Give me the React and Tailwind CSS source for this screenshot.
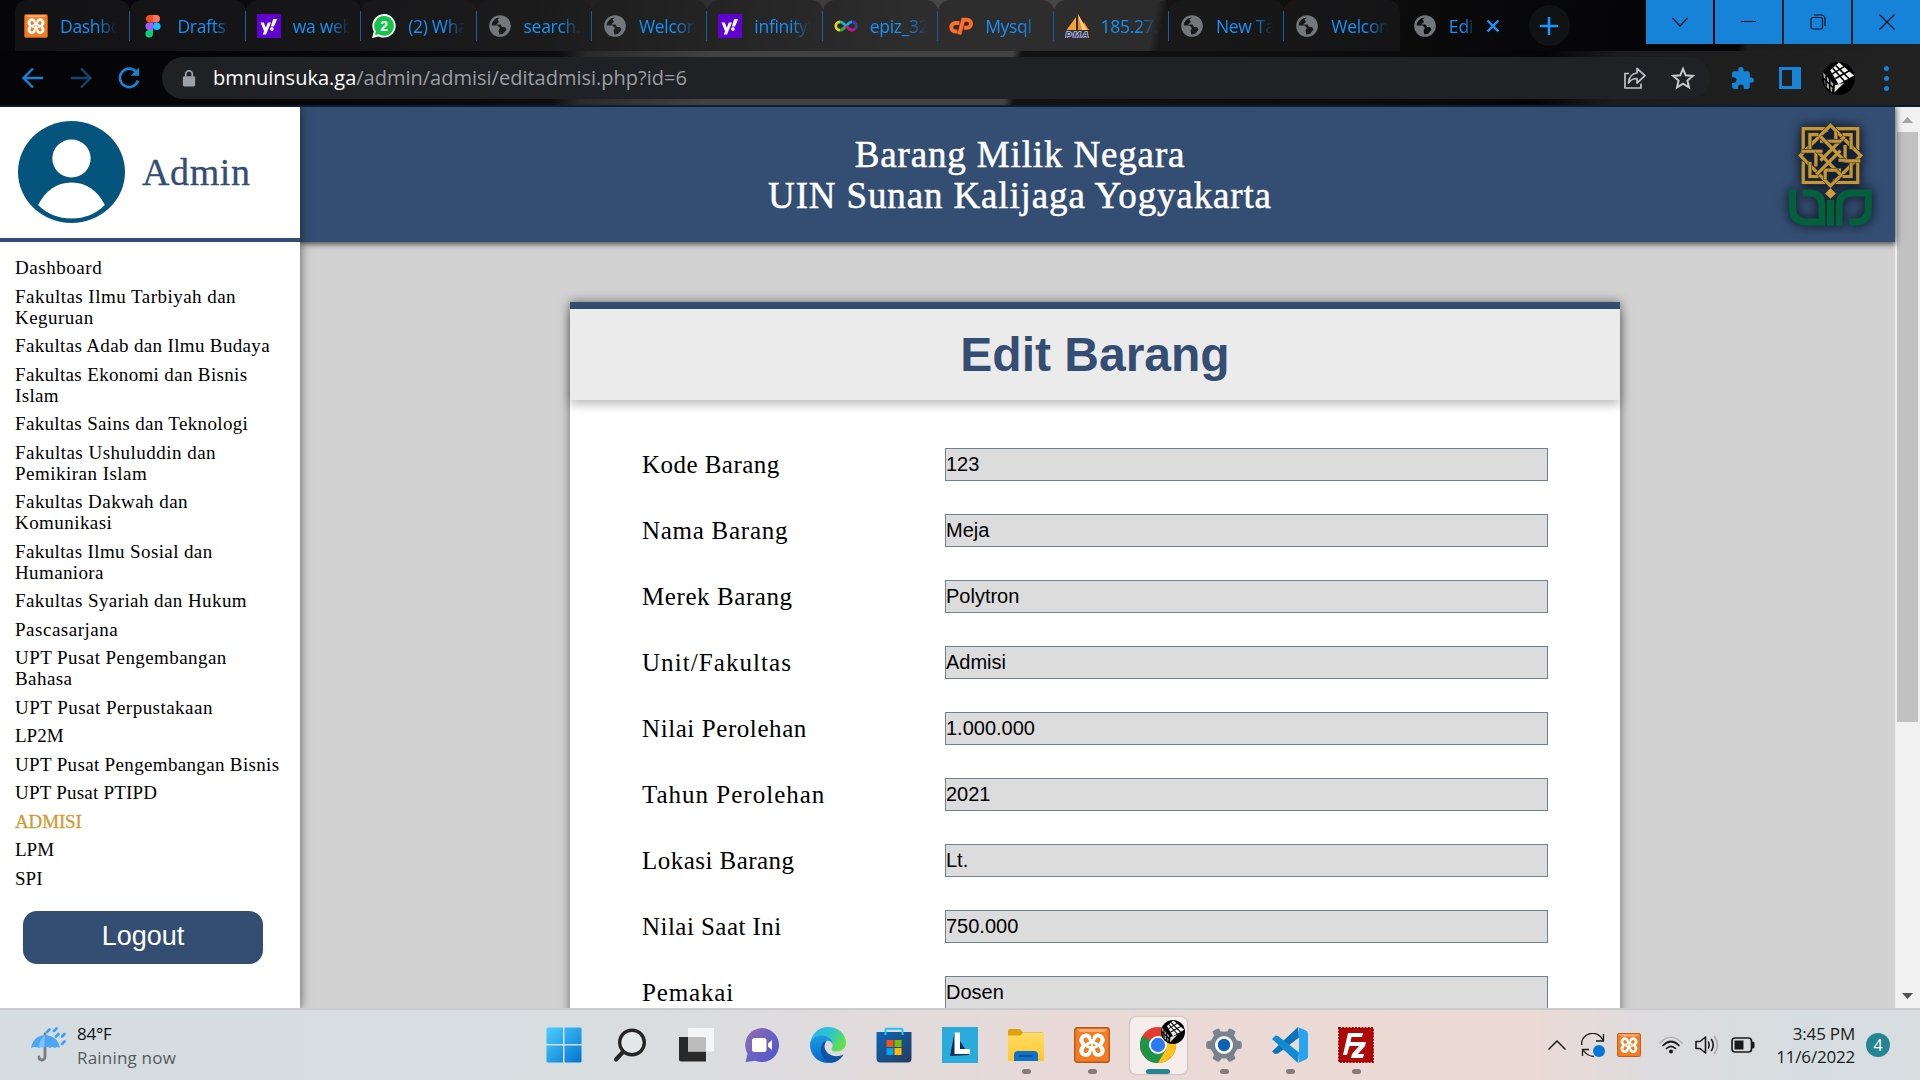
import React from 'react';

const tabs = [
  { icon: 'xampp', title: 'Dashboard' },
  { icon: 'figma', title: 'Drafts - Figma' },
  { icon: 'yahoo', title: 'wa web - Yahoo' },
  { icon: 'whatsapp', title: '(2) WhatsApp' },
  { icon: 'globe', title: 'search.php' },
  { icon: 'globe', title: 'Welcome' },
  { icon: 'yahoo', title: 'infinityfree' },
  { icon: 'infinity', title: 'epiz_3278' },
  { icon: 'cpanel', title: 'Mysql' },
  { icon: 'pma', title: '185.27.134' },
  { icon: 'globe', title: 'New Tab' },
  { icon: 'globe', title: 'Welcome', last: true },
];

const menu = [
  ['Dashboard', 'tracking-[0.54px]'],
  ['Fakultas Ilmu Tarbiyah dan Keguruan', 'tracking-[0.47px]'],
  ['Fakultas Adab dan Ilmu Budaya', 'tracking-[0.35px]'],
  ['Fakultas Ekonomi dan Bisnis Islam', 'tracking-[0.34px]'],
  ['Fakultas Sains dan Teknologi', 'tracking-[0.34px]'],
  ['Fakultas Ushuluddin dan Pemikiran Islam', 'tracking-[0.48px]'],
  ['Fakultas Dakwah dan Komunikasi', 'tracking-[0.44px]'],
  ['Fakultas Ilmu Sosial dan Humaniora', 'tracking-[0.38px]'],
  ['Fakultas Syariah dan Hukum', 'tracking-[0.42px]'],
  ['Pascasarjana', 'tracking-[0.52px]'],
  ['UPT Pusat Pengembangan Bahasa', 'tracking-[0.43px]'],
  ['UPT Pusat Perpustakaan', 'tracking-[0.47px]'],
  ['LP2M', 'tracking-[0px]'],
  ['UPT Pusat Pengembangan Bisnis', 'tracking-[0.34px]'],
  ['UPT Pusat PTIPD', 'tracking-[0.22px]'],
  ['ADMISI', 'tracking-[-0.15px]'],
  ['LPM', 'tracking-[0px]'],
  ['SPI', 'tracking-[0px]'],
];

const fields = [
  ['Kode Barang', '123', 'tracking-[0.46px]'],
  ['Nama Barang', 'Meja', 'tracking-[0.73px]'],
  ['Merek Barang', 'Polytron', 'tracking-[0.58px]'],
  ['Unit/Fakultas', 'Admisi', 'tracking-[1.07px]'],
  ['Nilai Perolehan', '1.000.000', 'tracking-[0.58px]'],
  ['Tahun Perolehan', '2021', 'tracking-[1px]'],
  ['Lokasi Barang', 'Lt.', 'tracking-[0.46px]'],
  ['Nilai Saat Ini', '750.000', 'tracking-[0.46px]'],
  ['Pemakai', 'Dosen', 'tracking-[0.84px]'],
];

function Xampp({ className }) {
  return (
    <svg viewBox="0 0 36 36" className={className}>
      <rect x="0.7" y="0.7" width="34.6" height="34.6" rx="2.5" fill="#f47b20" stroke="#b5581b" strokeWidth="1.4" />
      <path d="M3 2h30c-1 2.500-3 3-5 3H8C6 5 4 4.500 3 2z" fill="#ffb98a" opacity=".8" />
      <g fill="none" strokeLinecap="round" strokeLinejoin="round">
        <path d="M11.800 13 16.300 18l-4.500 5.500M24.200 13 19.700 18l4.500 5.500" stroke="#fff" strokeWidth="13" />
        <path d="M11.800 12.800 14.800 18l-3 5.700M24.200 12.800 21.200 18l3 5.700" stroke="#f47b20" strokeWidth="4.600" />
        <path d="M18 7v4.500M18 25v5" stroke="#f47b20" strokeWidth="1.500" />
        <path d="M12.500 17.500 18 14.500l5.500 3M12.500 19 18 21.500l5.500-2.500" stroke="#fff" strokeWidth="2.600" />
      </g>
    </svg>
  );
}

function Globe() {
  return (
    <svg viewBox="0 0 24 24" className="h-6 w-6">
      <circle cx="12" cy="12" r="9.600" fill="none" stroke="#74787c" strokeWidth="2.400" />
      <path d="M13 2.500 9.500 5.500 11 8l-3 2.500h4.500l1.500 2.500h3l1.500 2.500-4 5.500 6-3.500 2-6-2-6z" fill="#74787c" />
      <path d="M2.500 11.500h7l2.500 2.500-1.500 2.500 1 5L6 19.500z" fill="#74787c" />
    </svg>
  );
}

function Favicon({ name }) {
  if (name === 'xampp') return <Xampp className="h-6 w-6" />;
  if (name === 'globe') return <Globe />;
  if (name === 'figma')
    return (
      <svg viewBox="0 0 24 24" className="h-6 w-6">
        <path d="M12 1H8.200a3.800 3.800 0 0 0 0 7.500H12z" fill="#f24e1e" />
        <path d="M12 1h3.800a3.800 3.800 0 0 1 0 7.500H12z" fill="#ff7262" />
        <path d="M12 8.500H8.200a3.700 3.700 0 0 0 0 7.400H12z" fill="#a259ff" />
        <circle cx="15.800" cy="12.200" r="3.800" fill="#1abcfe" />
        <path d="M8.200 15.900H12v3.700a3.800 3.800 0 1 1-3.800-3.700z" fill="#0acf83" />
      </svg>
    );
  if (name === 'yahoo')
    return (
      <svg viewBox="0 0 24 24" className="h-6 w-6">
        <path d="M0 0h24v24H0z" fill="#6001d2" />
        <path d="M3.500 8.500h3.300l2 5.200 2-5.200H14L9 20.500H5.700l1.400-3.300z" fill="#fff" />
        <path d="m16.200 5 4 .1-3.200 7.400h-3.200zM14.500 13.300a1.800 1.800 0 1 1-.1 3.500 1.800 1.800 0 0 1 .1-3.500z" fill="#fff" />
      </svg>
    );
  if (name === 'whatsapp')
    return (
      <svg viewBox="0 0 24 24" className="h-6 w-6">
        <path d="M12.200 0A11.800 11.800 0 0 0 1.800 17.500L0 24l6.700-1.600A11.800 11.800 0 1 0 12.200 0z" fill="#fff" />
        <path d="M12.200 2A9.900 9.900 0 0 0 3.900 17.400L2.800 21.300l4-1A9.900 9.900 0 1 0 12.200 2z" fill="#15c24a" />
        <text x="12.200" y="17" textAnchor="middle" fontSize="14" fontWeight="700" fill="#fff" fontFamily="Liberation Sans, sans-serif">2</text>
      </svg>
    );
  if (name === 'infinity')
    return (
      <svg viewBox="0 0 24 24" className="h-6 w-6" fill="none" strokeWidth="2.800">
        <path d="M12 12C9.500 9 8.200 7.800 6 7.800" stroke="#19b5c8" />
        <path d="M6 7.800a4.200 4.200 0 0 0 0 8.400" stroke="#e3d51c" />
        <path d="M6 16.200c2.200 0 3.500-1.200 6-4.200" stroke="#33a83d" />
        <path d="M12 12c2.500-3 3.800-4.200 6-4.200" stroke="#18a7e0" />
        <path d="M18 7.800a4.200 4.200 0 0 1 3 7.200" stroke="#4a3b9a" />
        <path d="M21 15c-3 2.500-6 .5-9-3" stroke="#c2188b" />
      </svg>
    );
  if (name === 'cpanel')
    return (
      <svg viewBox="0 0 24 24" className="h-6 w-6" fill="none" stroke="#ff6c2c" strokeWidth="4">
        <path d="M10.500 9H6.500a4.200 4.200 0 0 0 0 8.500h2" />
        <path d="m10.300 20.500 3.900-14.800h3.800a4 4 0 0 1 0 8h-3" />
      </svg>
    );
  return (
    <svg viewBox="0 0 24 24" className="h-6 w-6">
      <path d="M1.500 16 11 3v13z" fill="#f7a13a" />
      <path d="M13 0v16h11L19 8l-1 2z" fill="#f58a1f" />
      <path d="m13 0 9 16h-5z" fill="#ffd08a" />
      <text x="12" y="23.500" textAnchor="middle" fontSize="9" fontWeight="700" fontStyle="italic" fill="#34366e" stroke="#c9cbe0" strokeWidth="1.600" paintOrder="stroke" textLength="23" fontFamily="Liberation Sans, sans-serif">PMA</text>
    </svg>
  );
}

function Cube({ className }) {
  return (
    <svg viewBox="0 0 32 32" className={className}>
      <circle cx="16" cy="16" r="16" fill="#000" />
      <path d="M16.500.500 31 13l-15 8.500L8 8z" fill="#f4f4f0" />
      <path d="m1 10 10 11-1.500 8L3 23z" fill="#a9a99c" />
      <path d="m12.500 22.500 9-2.500-9.500 9.500z" fill="#e5e5dc" />
      <path d="M13.500 3.500 26.500 16.500M10.500 6l11.500 13M10 11.500 21.500 4.500M13 16 26.500 8.500M4 13v11M7.500 16v12M1 15.500l10 9.500" stroke="#000" strokeWidth="1.500" fill="none" />
    </svg>
  );
}

function WindowButton({ children }) {
  return <div className="flex h-[54px] w-[67px] items-center justify-center bg-[#1683d8]">{children}</div>;
}

function TabStrip() {
  return (
    <div className="flex h-[51px] bg-[linear-gradient(100deg,#060509_0%,#0a090c_12%,#1b1b1b_28%,#303030_37%,#484848_48%,#444_60%,#141414_60.500%,#0a0a0b_75%,#050407_84%,#050407_90.500%,#1c1c1c_91%,#222_100%)]">
      <div className="ml-[15px] flex">
        {tabs.map((tab, i) => (
          <div key={i} className={`relative flex h-[51px] w-[115.400px] items-center rounded-t-xl bg-[#1c1c1e]/60 ${i === 0 ? 'pl-[9px]' : 'pl-[11px]'}`}>
            <Favicon name={tab.icon} />
            <div className="ml-3 w-[57px] overflow-hidden whitespace-nowrap font-['Open_Sans',sans-serif] text-[17.500px] leading-6 tracking-[-0.300px] text-[#1890f5] [mask-image:linear-gradient(90deg,#000_65%,transparent)]">{tab.title}</div>
            {!tab.last && <div className="absolute right-0 top-[11px] h-[30px] w-px bg-[#155f9e]" />}
          </div>
        ))}
        <div className="flex h-[51px] w-[118px] items-center pl-[13px]">
          <Globe />
          <div className="ml-3 w-[26px] overflow-hidden whitespace-nowrap font-['Open_Sans',sans-serif] text-[17.500px] leading-6 text-[#1890f5] [mask-image:linear-gradient(90deg,#000_60%,transparent)]">Edit Barang</div>
          <svg viewBox="0 0 14 14" className="ml-[11px] h-[14px] w-[14px]" stroke="#1a96ff" strokeWidth="2.400"><path d="m1.500 1.500 11 11m0-11-11 11" /></svg>
        </div>
      </div>
      <div className="ml-[11px] mt-[5px] flex h-[41px] w-[41px] items-center justify-center rounded-full bg-[#111213]">
        <svg viewBox="0 0 18 18" className="h-[18px] w-[18px]" stroke="#1a96ff" strokeWidth="2.600" strokeLinecap="round"><path d="M9 1v16M1 9h16" /></svg>
      </div>
      <div className="ml-auto flex h-[44px] gap-[2px] overflow-hidden">
        <WindowButton><svg viewBox="0 0 16 10" className="mb-[11px] h-[10px] w-4" fill="none" stroke="#04121f" strokeWidth="1.200"><path d="m.5 1 7.500 8L15.500 1" /></svg></WindowButton>
        <WindowButton><div className="mb-[11px] h-px w-[15px] bg-[#04121f]" /></WindowButton>
        <WindowButton><svg viewBox="0 0 16 16" className="mb-[11px] h-4 w-4" fill="none" stroke="#04121f" strokeWidth="1.200"><rect x="1" y="3.500" width="11.500" height="11.500" rx="2" /><path d="M4 1h7a4 4 0 0 1 4 4v7" /></svg></WindowButton>
        <WindowButton><svg viewBox="0 0 16 16" className="mb-[11px] h-4 w-4" fill="none" stroke="#04121f" strokeWidth="1.200"><path d="m.5.500 15 15m0-15-15 15" /></svg></WindowButton>
      </div>
    </div>
  );
}

function Toolbar() {
  return (
    <div className="flex h-[56px] items-center border-b-2 border-[#0a1e2f] bg-[linear-gradient(100deg,#040306_0%,#060508_18%,#0d0c0e_29%,#2b2a2b_30.500%,#424242_37%,#424242_52.500%,#131313_53%,#0a0a0b_75%,#040306_80%,#1c1c1c_84%,#222_100%)]">
      <svg viewBox="0 0 24 24" className="ml-[21px] h-6 w-6" fill="none" stroke="#1783d6" strokeWidth="2.400"><path d="M22 12H3M12 2.500 2.500 12l9.500 9.500" /></svg>
      <svg viewBox="0 0 24 24" className="ml-6 h-6 w-6" fill="none" stroke="#12466f" strokeWidth="2.400"><path d="M2 12h19M12 2.500l9.500 9.500-9.500 9.500" /></svg>
      <svg viewBox="0 0 24 24" className="ml-6 h-6 w-6" fill="none" stroke="#1783d6" strokeWidth="2.600"><path d="M19.300 6A9.200 9.200 0 1 0 21 14.500" /><path d="M22 1.500v8.300h-8.300z" fill="#1783d6" stroke="none" /></svg>
      <div className="ml-[21px] flex h-[42px] w-[1548px] items-center rounded-full bg-[#202124] pl-[20px]">
        <svg viewBox="0 0 14 18" className="h-[17px] w-[14px]"><rect x="0.500" y="6.500" width="13" height="11" rx="1.500" fill="#9aa0a6" /><path d="M3.500 7V4.500a3.500 3.500 0 0 1 7 0V7" fill="none" stroke="#9aa0a6" strokeWidth="1.800" /></svg>
        <div className="ml-[17px] whitespace-nowrap font-['Open_Sans',sans-serif] text-[20px] leading-[26px] tracking-[0px] text-[#9a9ea3]"><span className="text-white">bmnuinsuka.ga</span>/admin/admisi/editadmisi.php?id=6</div>
        <svg viewBox="0 0 24 24" className="ml-auto h-6 w-6" fill="none" stroke="#bdc1c6" strokeWidth="1.700"><path d="M6 7.500H2V22h16v-4.500" /><path d="M14 2.500v4.500C8.500 7.500 6 11.500 5.500 17c2-3 4.500-4.500 8.500-4.500v4.500l8-7.300z" strokeLinejoin="round" /></svg>
        <svg viewBox="0 0 24 24" className="ml-6 mr-[15px] h-6 w-6" fill="none" stroke="#c4c7cb" strokeWidth="2"><path d="m12 2.800 2.700 6.500 7 .6-5.300 4.600 1.600 6.800-6-3.600-6 3.600 1.600-6.800L2.300 9.900l7-.6z" /></svg>
      </div>
      <svg viewBox="0 0 24 24" className="ml-[20px] h-[25px] w-[25px]" fill="#1783d6"><path d="M20.500 11H19V7a2 2 0 0 0-2-2h-4V3.500a2.500 2.500 0 0 0-5 0V5H4a2 2 0 0 0-2 2v3.800h1.500a2.700 2.700 0 0 1 0 5.400H2V20a2 2 0 0 0 2 2h3.800v-1.500a2.700 2.700 0 0 1 5.400 0V22H17a2 2 0 0 0 2-2v-4h1.500a2.500 2.500 0 0 0 0-5z" /></svg>
      <svg viewBox="0 0 22 22" className="ml-[24px] h-[22px] w-[22px]"><path fillRule="evenodd" d="M0 0h22v22H0zM3 3v16h10V3z" fill="#1783d6" /></svg>
      <Cube className="ml-[21px] h-[33px] w-[33px]" />
      <div className="ml-[29px] flex flex-col gap-[5px]"><i className="h-[5px] w-[5px] rounded-full bg-[#1783d6]" /><i className="h-[5px] w-[5px] rounded-full bg-[#1783d6]" /><i className="h-[5px] w-[5px] rounded-full bg-[#1783d6]" /></div>
    </div>
  );
}

function Sidebar() {
  return (
    <aside className="relative z-20 w-[300px] shrink-0 bg-white shadow-[0_0_10px_rgba(0,0,0,0.6)]">
      <div className="flex h-[135px] items-start border-b-4 border-[#344e73] pl-[18px] pt-[14px]">
        <svg viewBox="0 0 106 102" preserveAspectRatio="none" className="h-[102px] w-[107px]">
          <ellipse cx="53" cy="51" rx="53" ry="51" fill="#05547d" />
          <circle cx="53" cy="37.500" r="19" fill="#fff" />
          <path d="M20 84c7-14 18-22.500 33-22.500S79 70 86 84c-9 9-20 13.500-33 13.500S29 93 20 84z" fill="#fff" />
        </svg>
        <div className="ml-[17px] mt-[29px] font-['Liberation_Serif',serif] text-[38px] leading-[44px] tracking-[0.600px] text-[#344e73] [-webkit-text-stroke:0.3px_#344e73]">Admin</div>
      </div>
      <nav className="flex flex-col gap-[7.500px] pl-[15px] pr-4 pt-[15px] font-['Liberation_Serif',serif] text-[19px] leading-[21px] text-black">
        {menu.map(([label, tracking]) => (
          <a key={label} className={`${tracking} ${label === 'ADMISI' ? 'text-[#cf9b35] [-webkit-text-stroke:0.3px_#cf9b35]' : ''}`}>{label}</a>
        ))}
      </nav>
      <button className="ml-[23px] mt-[22px] block h-[53px] w-[240px] rounded-[14px] bg-[#344e73] pb-[2px] font-['Liberation_Sans',sans-serif] text-[27px] leading-[51px] text-white">Logout</button>
    </aside>
  );
}

const strands = [
  'M908 150V86h66l6 10M1006 86h66v64M1072 184v64h-66l-6-10M974 248h-66v-64',
  'M990 76l91 91-91 91-91-91z',
  'M928 148v-44h26M1026 104h26v44M1052 186v44h-26M954 230h-26v-44',
  'M958 124h48V96M1034 135v48h46M1022 211h-48v28M946 200v-46h-44',
  'M960 182l72-72M1020 152l-72 72M960 110l72 72M948 152l72 72',
  'M1022 124h-28M946 154h20M1034 181h-20M984 211h26',
];

function UinLogo() {
  return (
    <svg viewBox="860 60 260 325" className="h-[108px] w-[87px] overflow-visible [filter:drop-shadow(0_0_6px_rgba(0,0,0,0.85))]">
      <path d="M908 86h164v162H908z" fill="#15233c" opacity=".75" />
      {strands.map((d) => (
        <g key={d} fill="none">
          <path d={d} stroke="#26344a" strokeWidth="13" />
          <path d={d} stroke="#c8962f" strokeWidth="9.500" />
        </g>
      ))}
      <path d="m990 265 16 16-16 16-16-16z" fill="#cf9b35" />
      <g fill="none" stroke="#045f3c" strokeWidth="21">
        <path d="M876 269v56q0 42 42 42h46v-50q0-37-37-37h-21" />
        <path d="M990 300v78" strokeWidth="23" />
        <path d="M1016 378v-58q0-40 40-40h48v46q0 41-41 41h-16" />
      </g>
    </svg>
  );
}

function WebPage() {
  return (
    <div className="flex h-[901px] overflow-hidden bg-[#d2d2d2]">
      <Sidebar />
      <div className="flex w-[1595px] shrink-0 flex-col">
        <header className="relative z-10 flex h-[135px] shrink-0 items-start bg-[#344e73] shadow-[0_1px_6px_1px_rgba(0,0,0,0.65)]">
          <h1 className="ml-[420px] w-[600px] pt-[27px] text-center font-['Liberation_Serif',serif] text-[37px] leading-[41px] tracking-[0.860px] text-white [-webkit-text-stroke:0.5px_white]">Barang Milik Negara<br />UIN Sunan Kalijaga Yogyakarta</h1>
          <div className="ml-[467px] mt-[13px]"><UinLogo /></div>
        </header>
        <main className="ml-[270px] mt-[60px] h-[800px] w-[1050px] shrink-0 border-t-[7px] border-[#344e73] bg-white shadow-[0_0_10px_rgba(0,0,0,0.5)]">
          <h2 className="h-[91px] bg-[#ebebeb] text-center font-['Liberation_Sans',sans-serif] text-[48px] font-bold leading-[91px] text-[#344e73] shadow-[0_4px_10px_rgba(0,0,0,0.28)]">Edit Barang</h2>
          <form className="flex flex-col gap-[33px] px-[72px] pt-[48px]">
            {fields.map(([label, value, tracking]) => (
              <div key={label} className="flex h-[33px] items-center">
                <label className={`w-[303px] shrink-0 whitespace-nowrap font-['Liberation_Serif',serif] text-[25px] leading-[33px] text-black ${tracking}`}>{label}</label>
                <div className="h-[33px] grow border border-[#6f8093] bg-[#dcdcdc] font-['Liberation_Sans',sans-serif] text-[20px] leading-[30px] text-black">{value}</div>
              </div>
            ))}
          </form>
        </main>
      </div>
      <div className="flex grow flex-col items-center bg-[#f1f1f1]">
        <svg viewBox="0 0 11 6" className="mt-[10px] h-[6px] w-[11px]"><path d="M0 6 5.500 0 11 6z" fill="#a3a3a3" /></svg>
        <div className="mt-[9px] h-[590px] w-[21px] bg-[#c1c1c1]" />
        <svg viewBox="0 0 11 6" className="mb-[9px] mt-auto h-[6px] w-[11px]"><path d="M0 0h11L5.500 6z" fill="#505050" /></svg>
      </div>
    </div>
  );
}

function TaskIcon({ name }) {
  switch (name) {
    case 'windows':
      return (
        <svg viewBox="0 0 36 36" className="h-9 w-9">
          <defs><linearGradient id="win" gradientUnits="userSpaceOnUse" x1="0" y1="0" x2="36" y2="36"><stop stopColor="#4fd0ff" /><stop offset="1" stopColor="#0072d0" /></linearGradient></defs>
          <path d="M2 .500h15v16.500H.500V2Q.500.500 2 .500zM18.500.500h15.500q1.500 0 1.500 1.500v15h-17zM.500 18.500H17v17H2q-1.500 0-1.500-1.500zM18.500 18.500h17V34q0 1.500-1.500 1.500H18.500z" fill="url(#win)" />
        </svg>
      );
    case 'search':
      return (
        <svg viewBox="0 0 36 36" className="h-9 w-9" fill="none" stroke="#262626" strokeLinecap="round">
          <circle cx="20" cy="15.500" r="12.300" fill="#e4e8ea" strokeWidth="3.400" />
          <path d="M11 25 4 32.500" strokeWidth="4.200" />
        </svg>
      );
    case 'taskview':
      return (
        <svg viewBox="0 0 36 36" className="h-9 w-9">
          <path d="M1 10h25q2 0 2 2v22.500H3q-2 0-2-2z" fill="#292929" />
          <path d="M10 1h25.500q1 0 1 1v22.500H10z" fill="#f5f5f5" opacity=".95" />
          <path d="M10 10h16q2 0 2 2v12.500H10z" fill="#bcbcbc" />
        </svg>
      );
    case 'chat':
      return (
        <svg viewBox="0 0 36 36" className="h-9 w-9">
          <defs><linearGradient id="chat" x1="0" y1="0" x2="1" y2="1"><stop stopColor="#9a6aa8" /><stop offset=".5" stopColor="#6a62c4" /><stop offset="1" stopColor="#4f52c8" /></linearGradient></defs>
          <path d="M18 1a17 17 0 1 1-6.500 32.700L1.500 35l2-8.500A17 17 0 0 1 18 1z" fill="url(#chat)" />
          <rect x="8" y="11" width="14.500" height="14" rx="2.500" fill="#fff" />
          <path d="m24 16.500 4-3.500v10l-4-3.500z" fill="#fff" />
        </svg>
      );
    case 'edge':
      return (
        <svg viewBox="0 0 36 36" className="h-9 w-9">
          <defs>
            <linearGradient id="edgeTop" x1="0" y1="0" x2="1" y2=".5"><stop stopColor="#2bb5f0" /><stop offset=".55" stopColor="#2cc3cf" /><stop offset="1" stopColor="#63e04b" /></linearGradient>
            <linearGradient id="edgeLow" x1="0" y1="0" x2="0" y2="1"><stop stopColor="#1a9be8" /><stop offset="1" stopColor="#0869c6" /></linearGradient>
          </defs>
          <path d="M0 18C1 7 8.500 0 18 0c10 0 18 7 18 15.500 0 5.500-4 9-9.500 9-4 0-5.500-1.200-5-2.500 2-2.500 1.800-8-4.500-10C9 10 2 13 0 18z" fill="url(#edgeTop)" />
          <path d="M0 18c0-6 6-9.500 11.500-9.500 7 0 11 4.500 11 8.500-1-3-4-4-6-3-6 4-6 14 4 20-1 1.500-2 2-2.500 2C8 36 0 28 0 18z" fill="url(#edgeLow)" />
          <path d="M13.500 15c-6 8-1 18 6.500 21 6 0 11-4 13.500-8.500-9 4.500-18.500-.5-19-8 0-2 .8-4 2-5.500z" fill="#0f54a3" />
        </svg>
      );
    case 'store':
      return (
        <svg viewBox="0 0 36 36" className="h-9 w-9">
          <defs><linearGradient id="store" x1="0" y1="0" x2="1" y2="1"><stop stopColor="#0e65b5" /><stop offset="1" stopColor="#263b62" /></linearGradient></defs>
          <path d="M.500 5h35v26.500q0 4-4 4h-27q-4 0-4-4z" fill="url(#store)" />
          <path d="M9.500 8V3q0-1.200 1.200-1.200h14.600q1.200 0 1.200 1.200v5" fill="none" stroke="#22c3f3" strokeWidth="2" />
          <path d="M10.500 13h7v7h-7z" fill="#f25022" /><path d="M18.500 13h7v7h-7z" fill="#7fba00" /><path d="M10.500 21h7v7h-7z" fill="#00a4ef" /><path d="M18.500 21h7v7h-7z" fill="#ffb900" />
        </svg>
      );
    case 'l':
      return (
        <svg viewBox="0 0 36 36" className="h-9 w-9">
          <path d="M0 0h36v36H0z" fill="#29abdb" />
          <path d="M12.500 5.500 8 29l19-1z" fill="#0b2c63" />
          <path d="M12.500 5.500H18V22h10v5H12.500z" fill="#fff" />
        </svg>
      );
    case 'folder':
      return (
        <svg viewBox="0 0 36 36" className="h-9 w-9">
          <defs><linearGradient id="fold" x1="0" y1="0" x2="0" y2="1"><stop stopColor="#ffdb65" /><stop offset="1" stopColor="#ffc72e" /></linearGradient></defs>
          <path d="M0 3.500Q0 2 1.500 2h10.500l3 3.500H34q2 0 2 2V12H0z" fill="#dda20c" />
          <path d="M0 8.500h12l3-2.500h20q1 0 1 1v27H0z" fill="url(#fold)" />
          <path d="M6 34v-6q0-4 4-4h16q4 0 4 4v6z" fill="#0e73c7" /><path d="M11 29h14" stroke="#0a4486" strokeWidth="1.500" />
        </svg>
      );
    case 'xampp':
      return <Xampp className="h-9 w-9" />;
    case 'chrome':
      return (
        <svg viewBox="0 0 36 36" className="h-9 w-9">
          <circle cx="18" cy="18" r="18" fill="#e33b2e" />
          <path d="M18 18 2.400 9A18 18 0 0 0 18 36l8-13z" fill="#1e9447" />
          <path d="M18 9.500h15.800A18 18 0 0 1 18 36l8-13.500z" fill="#fcc21b" />
          <circle cx="18" cy="18" r="9" fill="#fff" /><circle cx="18" cy="18" r="7.200" fill="#2f7af0" />
        </svg>
      );
    case 'gear':
      return (
        <svg viewBox="0 0 36 36" className="h-9 w-9">
          <path d="M14.500 4.500 13 1.500Q9.500 2 6.500 4.500L8 8.500 5 13.500.800 14.500Q-.5 18 .800 21.500L5 22.500l3 5-1.500 4q3 2.500 6.500 3.500l2.500-3.500h5L23 35q3.500-1 6.500-3.500l-1.500-4 3-5 4.200-1q1.300-3.500 0-7L31 13.500l-3-5 1.500-4Q26.500 2 23 1.500l-1.500 3z" fill="#77828c" />
          <circle cx="18" cy="18" r="9" fill="#fff" /><circle cx="18" cy="18" r="6.200" fill="#0c61b5" />
        </svg>
      );
    case 'vscode':
      return (
        <svg viewBox="0 0 36 36" className="h-9 w-9">
          <path d="M26 0 0 24.500 3 27l3-.5 21-16z" fill="#0c72b9" />
          <path d="M3.500 8.500 0 12l26 24 1-10.500L6 9z" fill="#0f8bd3" />
          <path d="M26 0q1 1 1 2v32q0 1-1 2l8-3.500q2-1 2-3V6.500q0-2-2-3z" fill="#28a4f0" />
        </svg>
      );
    default:
      return (
        <svg viewBox="0 0 36 36" className="h-9 w-9">
          <rect x="1" y="1" width="34" height="34" fill="#b00707" stroke="#900" strokeWidth="2" strokeDasharray="2 1.200" />
          <path d="M10 6h15l-1 4H13.500l-1 5H21l-1 4h-8.500L9 28H5zM17 15h11l-1 4-7 8h6l-1 4H13l1-4 7-8h-5z" fill="#fff" />
        </svg>
      );
  }
}

const apps = [
  ['windows'], ['search'], ['taskview'], ['chat'], ['edge'], ['store'], ['l'],
  ['folder', true], ['xampp', true], ['chrome', true], ['gear', true], ['vscode', true], ['filezilla', true],
];

function Taskbar() {
  return (
    <footer className="flex h-[72px] items-center border-t-2 border-[#c9cbcd] bg-[linear-gradient(90deg,#d5dde1_0%,#d8dde0_30%,#dddcde_40%,#e8d9d8_55%,#ecdad4_70%,#ebdad6_80%,#dddcde_86%,#d6dde0_94%,#d8dde0_100%)] font-['Open_Sans',sans-serif]">
      <div className="flex w-[531px] items-center pl-[30px]">
        <svg viewBox="0 0 36 36" className="h-9 w-9">
          <path d="M15 7v22q0 4-3 4t-3-3" fill="none" stroke="#7b7b80" strokeWidth="2.800" strokeLinecap="round" />
          <path d="M1 21Q3 9 15 8q13 1 15 13-3-2-5 0-3-2-5 0-3-2-6 0-2-2-5 0-4-2-8 0z" fill="#4ea6f3" />
          <path d="M15 8q-6 5-6 13 3-2 5 0z" fill="#7dc3ff" />
          <path d="m17 5 2.500-2.500M24 4l2.500-2.500M26 9.500 28.500 7M32 9.500 34.500 7M32 17l2.500-2.500" stroke="#3ba0f5" strokeWidth="2.600" strokeLinecap="round" />
        </svg>
        <div className="ml-[11px] mt-[2px] text-[17px] leading-6">
          <div className="tracking-[-0.200px] text-[#111]">84°F</div>
          <div className="tracking-[0.200px] text-[#56595c]">Raining now</div>
        </div>
      </div>
      {apps.map(([name, open]) => (
        <div key={name} className="flex h-[70px] w-[66px] items-center justify-center">
          <div className={`relative flex h-[57px] w-[57px] items-center justify-center rounded-md ${name === 'chrome' ? 'bg-[#f5eeed] shadow-[0_0_2px_rgba(0,0,0,0.35)]' : ''}`}>
            <TaskIcon name={name} />
            {name === 'chrome' && <Cube className="absolute right-[2px] top-[3px] h-[24px] w-[24px]" />}
            {open && <i className={`absolute bottom-0 h-[5px] rounded-full ${name === 'chrome' ? 'w-6 bg-[#268593]' : 'w-[9px] bg-[#857b7b]'}`} />}
          </div>
        </div>
      ))}
      <div className="ml-auto flex items-center pr-[30px]">
        <svg viewBox="0 0 18 10" className="h-[10px] w-[18px]" fill="none" stroke="#1a1a1a" strokeWidth="1.500"><path d="m.5 9.500 8.500-8.500 8.500 8.500" /></svg>
        <svg viewBox="0 0 24 24" className="ml-[15px] h-6 w-6" fill="none" stroke="#1a1a1a" strokeWidth="1.300"><path d="M.800 12A11 10 0 0 1 22 7M22.500 1v7H15M1.500 23v-6.500H8M2 17q4 6 11 6.500" /><circle cx="18" cy="18" r="6" fill="#0078d7" stroke="none" /></svg>
        <Xampp className="ml-[12px] h-6 w-6" />
        <svg viewBox="0 0 24 24" className="ml-[18px] h-6 w-6" fill="none" stroke="#1a1a1a" strokeWidth="1.700" strokeLinecap="round"><path d="M1 10Q12-1.500 23 10" stroke="#b0b2b4" /><path d="M4 12.500q8-8 16 0M7.500 15.500q4.500-4.500 9 0" /><circle cx="12" cy="18.500" r="2" fill="#1a1a1a" stroke="none" /></svg>
        <svg viewBox="0 0 24 24" className="ml-[12px] h-6 w-6" fill="none" stroke="#1a1a1a" strokeWidth="1.600" strokeLinecap="round" strokeLinejoin="round"><path d="M1 8.500h4L10.500 4v16L5 15.500H1zM13.500 9q1.500 3 0 6M16.500 6.500q3.500 5.500 0 11" /><path d="M19.500 3.500q6 8.500 0 17" stroke="#a9abad" /></svg>
        <svg viewBox="0 0 24 24" className="ml-[12px] h-6 w-6" fill="none" stroke="#1a1a1a" strokeWidth="1.700"><rect x="1" y="5" width="19.500" height="14" rx="3" /><path d="M3.500 7.500h9v9h-9z" fill="#1a1a1a" stroke="none" /><path d="M22 10v4" strokeWidth="3" strokeLinecap="round" /></svg>
        <div className="ml-[10px] w-[90px] text-right text-[17px] leading-[23px] tracking-[-0.200px] text-[#1b1b1b]"><div>3:45 PM</div><div className="whitespace-nowrap">11/6/2022</div></div>
        <div className="ml-[11px] flex h-6 w-6 items-center justify-center rounded-full bg-[#268593] text-[16px] leading-6 text-white">4</div>
      </div>
    </footer>
  );
}

export default function App() {
  return (
    <div className="h-[1080px] w-[1920px] overflow-hidden">
      <TabStrip />
      <Toolbar />
      <WebPage />
      <Taskbar />
    </div>
  );
}
